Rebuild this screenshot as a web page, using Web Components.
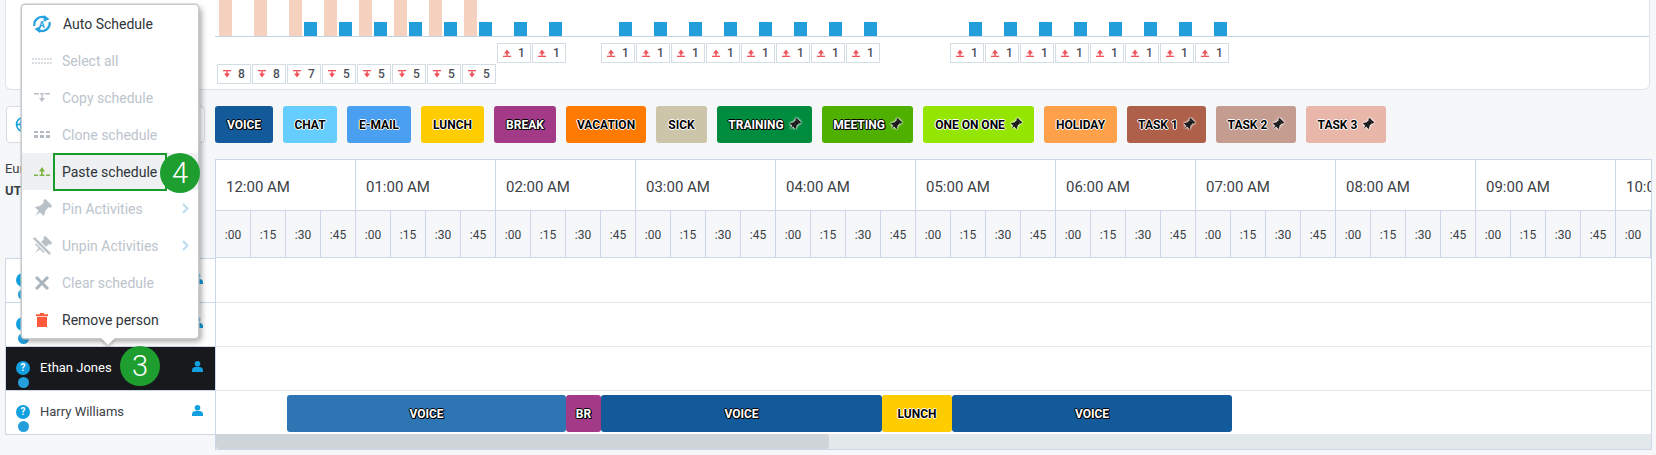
<!DOCTYPE html>
<html>
<head>
<meta charset="utf-8">
<title>Schedule</title>
<style>
    html, body
    {
        margin: 0;
        height: 455px;
        overflow: hidden;
        background: #f5f7f9;
        font-family: Roboto, "Liberation Sans", sans-serif;
    }
</style>
</head>
<body>
<sched-page></sched-page>

<script>
/**
 * small inline icons, shared by the components
 */
const objIcons =
{
    arrowDown: `<svg width="8" height="8" viewBox="0 0 8 8"><rect width="8" height="1.3" fill="#f0525c"/><path d="M3.2 1.3h1.6v2.2H7L4 7.6 1 3.5h2.2z" fill="#f0525c"/></svg>`,
    arrowUp: `<svg width="8" height="8" viewBox="0 0 8 8"><rect y="6.7" width="8" height="1.3" fill="#f0525c"/><path d="M3.2 6.7h1.6V4.5H7L4 .4 1 4.5h2.2z" fill="#f0525c"/></svg>`,
    pinShape: `<rect x="4" y="0.4" width="8" height="2.4" rx=".6"/><rect x="5.2" y="2.4" width="5.6" height="5"/><path d="M5.2 7 2.8 11h10.400L10.800 7z"/><path d="M7.200 10.800h1.600L8 16z"/>`,
    pin: (sColor, iSize) => `<svg width="${iSize}" height="${iSize}" viewBox="0 0 16 16"><g transform="rotate(45 8 8)" fill="${sColor}">${objIcons.pinShape}</g></svg>`,
    person: `<svg width="11" height="11" viewBox="0 0 11 11"><circle cx="5.5" cy="2.8" r="2.8" fill="#12a0e0"/><path d="M0 11V9.2C0 7.2 1.8 6 3.4 6h4.2C9.2 6 11 7.2 11 9.2V11z" fill="#12a0e0"/></svg>`
};

/**
 * chart on top: the bars and the under/over staffing badges
 */
class SchedChart extends HTMLElement
{
    static sTemplate = `
        <style>
            :host
            {
                display: block;
                box-sizing: border-box;
                width: 1645px;
                height: 90px;
                margin-left: 1px;
                padding-left: 209px;
                background: #fff;
                border: 1px solid #dde3e7;
                border-top: none;
                border-radius: 0 0 6px 6px;
            }
            .bars
            {
                display: flex;
                height: 36px;
                border-bottom: 1px solid #c6d5e6;
            }
            .col
            {
                flex: 0 0 35px;
                box-sizing: border-box;
                display: flex;
                align-items: flex-end;
                gap: 2px;
                padding-left: 4px;
            }
            .col i { display: block; width: 13px; }
            .peach { height: 36px; background: #f5d1c0; }
            .blue { height: 14px; background: #229fdb; }
            .row
            {
                display: flex;
                height: 21px;
            }
            .up { margin-top: 6px; padding-left: 282px; }
            .down { padding-left: 2px; }
            .badge
            {
                flex: 0 0 34px;
                box-sizing: border-box;
                height: 20px;
                margin-right: 1px;
                display: flex;
                align-items: center;
                justify-content: center;
                gap: 7px;
                border: 1px solid #d3dee4;
                font-size: 12px;
                font-weight: 500;
                color: #4a4f57;
            }
            .up .badge:nth-child(3) { margin-left: 34px; }
            .up .badge:nth-child(11) { margin-left: 69px; }
        </style>
        <div class="bars"></div>
        <div class="row up"></div>
        <div class="row down"></div>
    `;

    constructor()
    {
        super();
        this.attachShadow({mode: "open"});

        const objTemplate = document.createElement("template");
        objTemplate.innerHTML = SchedChart.sTemplate;
        this.shadowRoot.appendChild(objTemplate.content.cloneNode(true));
    }

    connectedCallback()
    {
        const arrBlue = [2, 3, 4, 5, 6, 7, 8, 9, 11, 12, 13, 14, 15, 16, 17, 18, 21, 22, 23, 24, 25, 26, 27, 28];
        let sBars = "";

        for (let iCol = 0; iCol < 41; iCol++)
        {
            const sPeach = iCol < 8 ? `<i class="peach"></i>` : `<i></i>`;
            const sBlue = arrBlue.includes(iCol) ? `<i class="blue"></i>` : "";
            sBars += `<div class="col">${sPeach}${sBlue}</div>`;
        }
        this.shadowRoot.querySelector(".bars").innerHTML = sBars;

        let sUp = "";
        for (let iBadge = 0; iBadge < 18; iBadge++)
            sUp += `<div class="badge">${objIcons.arrowUp}<span>1</span></div>`;
        this.shadowRoot.querySelector(".up").innerHTML = sUp;

        this.shadowRoot.querySelector(".down").innerHTML = [8, 8, 7, 5, 5, 5, 5, 5]
            .map(iVal => `<div class="badge">${objIcons.arrowDown}<span>${iVal}</span></div>`).join("");
    }
}

/**
 * coloured activity block, used in the legend and on the timeline
 * attribute light: black letters with a white edge instead of white with a black edge
 */
class SchedChip extends HTMLElement
{
    static sTemplate = `
        <style>
            :host
            {
                display: flex;
                box-sizing: border-box;
                align-items: center;
                justify-content: center;
                height: 37px;
                border-radius: 3px;
                font-size: 12px;
                font-weight: 700;
                color: #fff;
                text-shadow: 1px 0 0 #000, -1px 0 0 #000, 0 1px 0 #000, 0 -1px 0 #000, 1px 1px 0 #000;
            }
            :host([light])
            {
                color: #000;
                text-shadow: 1px 0 0 #fff, -1px 0 0 #fff, 0 1px 0 #fff, 0 -1px 0 #fff;
            }
            .pin:not(:empty) { margin-left: 4px; }
            svg { display: block; filter: drop-shadow(0 0 1px #fff) drop-shadow(0 0 .5px #fff); }
        </style>
        <slot></slot><span class="pin"></span>
    `;

    constructor()
    {
        super();
        this.attachShadow({mode: "open"});

        const objTemplate = document.createElement("template");
        objTemplate.innerHTML = SchedChip.sTemplate;
        this.shadowRoot.appendChild(objTemplate.content.cloneNode(true));
    }

    connectedCallback()
    {
        this.style.background = this.getAttribute("color");
        this.style.width = this.getAttribute("w") + "px";

        if (this.hasAttribute("pinned"))
            this.shadowRoot.querySelector(".pin").innerHTML = objIcons.pin("#1b1b1b", 13);
    }
}

/**
 * row of chips above the timeline
 */
class SchedLegend extends HTMLElement
{
    static sTemplate = `
        <style>
            :host
            {
                display: flex;
                gap: 10px;
                height: 37px;
            }
        </style>
        <slot></slot>
    `;

    constructor()
    {
        super();
        this.attachShadow({mode: "open"}).innerHTML = SchedLegend.sTemplate;
    }
}

/**
 * hours, quarters, the person rows and the scrollbar
 */
class SchedTimeline extends HTMLElement
{
    static sTemplate = `
        <style>
            :host
            {
                display: block;
                box-sizing: border-box;
                width: 1437px;
                margin-top: 16px;
                background: #fff;
                border: 1px solid #cdd7ea;
                overflow: hidden;
            }
            .hours, .quarters { display: flex; width: 1540px; }
            .hour
            {
                flex: 0 0 140px;
                box-sizing: border-box;
                height: 51px;
                padding-left: 10px;
                line-height: 55px;
                font-size: 15px;
                color: #3b4046;
                border-right: 1px solid #cdd7ea;
                border-bottom: 1px solid #cdd7ea;
            }
            .quarter
            {
                flex: 0 0 35px;
                box-sizing: border-box;
                height: 47px;
                line-height: 49px;
                text-align: center;
                font-size: 12px;
                color: #3b4046;
                background: #f5f7f9;
                border-right: 1px solid #cdd7ea;
                border-bottom: 1px solid #cdd7ea;
            }
            .line
            {
                box-sizing: border-box;
                height: 44px;
                border-bottom: 1px solid #e4e6ea;
            }
            .line.first { height: 45px; }
            .line.last
            {
                height: 43px;
                border-bottom: none;
                display: flex;
                padding: 4px 0 2px 71px;
            }
            .track
            {
                height: 15px;
                background: #e3e8ea;
            }
            .thumb
            {
                width: 613px;
                height: 100%;
                background: #cfd4d8;
                border-radius: 0 4px 4px 4px;
            }
        </style>
        <div class="hours"></div>
        <div class="quarters"></div>
        <div class="line first"></div>
        <div class="line"></div>
        <div class="line"></div>
        <div class="line last"><slot></slot></div>
        <div class="track"><div class="thumb"></div></div>
    `;

    constructor()
    {
        super();
        this.attachShadow({mode: "open"}).innerHTML = SchedTimeline.sTemplate;
    }

    connectedCallback()
    {
        const arrHours = ["12:00 AM", "01:00 AM", "02:00 AM", "03:00 AM", "04:00 AM", "05:00 AM", "06:00 AM", "07:00 AM", "08:00 AM", "09:00 AM", "10:00 AM"];
        const arrQuarters = [":00", ":15", ":30", ":45"];

        this.shadowRoot.querySelector(".hours").innerHTML =
            arrHours.map(sHour => `<div class="hour">${sHour}</div>`).join("");

        //only the quarters that fit in the visible part
        let sQuarters = "";
        for (let iQuarter = 0; iQuarter < 41; iQuarter++)
            sQuarters += `<div class="quarter">${arrQuarters[iQuarter % 4]}</div>`;
        this.shadowRoot.querySelector(".quarters").innerHTML = sQuarters;
    }
}

/**
 * one person in the list on the left
 */
class SchedPerson extends HTMLElement
{
    static sTemplate = `
        <style>
            :host
            {
                display: flex;
                box-sizing: border-box;
                height: 44px;
                padding: 14px 12px 0 10px;
                font-size: 13px;
                color: #3b4046;
                background: #fff;
                border-bottom: 1px solid #cdd7ea;
            }
            :host([active])
            {
                background: #17191c;
                color: #fff;
            }
            :host([last]) { border-bottom: none; height: 43px; }
            .status
            {
                flex: 0 0 14px;
                display: flex;
                flex-direction: column;
                align-items: center;
                gap: 2px;
            }
            .question
            {
                width: 14px;
                height: 14px;
                border-radius: 50%;
                background: #12a0e0;
                color: #fff;
                font-size: 10px;
                font-weight: 700;
                line-height: 14px;
                text-align: center;
            }
            .dot
            {
                width: 11px;
                height: 11px;
                border-radius: 50%;
                background: #259fdb;
            }
            .name
            {
                flex: 1;
                margin-left: 10px;
                line-height: 14px;
            }
            svg { display: block; }
        </style>
        <div class="status"><div class="question">?</div><div class="dot"></div></div>
        <div class="name"><slot></slot></div>
        <span class="icon"></span>
    `;

    constructor()
    {
        super();
        this.attachShadow({mode: "open"}).innerHTML = SchedPerson.sTemplate;
        this.shadowRoot.querySelector(".icon").innerHTML = objIcons.person;
    }
}

/**
 * left column: timezone select, timezone text and the people
 */
class SchedSide extends HTMLElement
{
    static sTemplate = `
        <style>
            :host
            {
                display: block;
                width: 210px;
            }
            .zone
            {
                box-sizing: border-box;
                width: 199px;
                height: 37px;
                margin-left: 1px;
                padding: 9px 0 0 8px;
                background: #fff;
                border: 1px solid #d7dde2;
                border-radius: 4px;
            }
            .text
            {
                box-sizing: border-box;
                height: 115px;
                padding-top: 15px;
                font-size: 13px;
                line-height: 22px;
                color: #3b4046;
            }
            .text b { display: block; font-weight: 700; }
            .people
            {
                border: 1px solid #cdd7ea;
                border-right: none;
            }
            svg { display: block; }
        </style>
        <div class="zone">
            <svg width="17" height="17" viewBox="0 0 17 17" fill="none" stroke="#12a0e0" stroke-width="1.6"><circle cx="8.5" cy="8.5" r="7"/><ellipse cx="8.5" cy="8.5" rx="3" ry="7"/><path d="M1.5 8.5h14"/></svg>
        </div>
        <div class="text">Europe<b>UTC</b></div>
        <div class="people"><slot></slot></div>
    `;

    constructor()
    {
        super();
        this.attachShadow({mode: "open"}).innerHTML = SchedSide.sTemplate;
    }
}

/**
 * context menu with the tip pointing at the selected person
 */
class SchedMenu extends HTMLElement
{
    static sTemplate = `
        <style>
            :host
            {
                position: absolute;
                left: 22px;
                top: 5px;
                width: 176px;
                height: 333px;
                background: #fff;
                border-radius: 3px;
                box-shadow: 0 0 0 1.5px #c6cacd, 3px 3px 6px rgba(0, 0, 0, .4);
            }
            .tip
            {
                position: absolute;
                left: 81px;
                top: 328px;
                width: 10px;
                height: 10px;
                background: #fff;
                transform: rotate(45deg);
                box-shadow: 2px 2px 3px rgba(0, 0, 0, .2);
            }
        </style>
        <slot></slot>
        <div class="tip"></div>
    `;

    constructor()
    {
        super();
        this.attachShadow({mode: "open"}).innerHTML = SchedMenu.sTemplate;
    }
}

/**
 * menu line: icon from the light DOM, text, optional chevron
 */
class SchedMenuItem extends HTMLElement
{
    static sTemplate = `
        <style>
            :host
            {
                display: flex;
                position: relative;
                align-items: center;
                box-sizing: border-box;
                height: 37px;
                padding-left: 9px;
                font-size: 14px;
                color: #2f343a;
            }
            :host([disabled]) { color: #bcc4cc; }
            :host([hover]) { background: #eef0f2; }
            .icon
            {
                flex: 0 0 22px;
                display: flex;
                justify-content: center;
                margin-right: 9px;
            }
            :host([first]) .icon { margin-right: 10px; }
            .chevron
            {
                position: absolute;
                right: 9px;
                top: 13px;
                display: none;
            }
            :host([submenu]) .chevron { display: block; }
        </style>
        <div class="icon"><slot name="icon"></slot></div>
        <slot></slot>
        <svg class="chevron" width="7" height="11" viewBox="0 0 7 11" fill="none" stroke="#bcdcf0" stroke-width="2"><path d="M1 1l4.5 4.5L1 10"/></svg>
    `;

    constructor()
    {
        super();
        this.attachShadow({mode: "open"}).innerHTML = SchedMenuItem.sTemplate;
    }
}

/**
 * green numbered circle of the walkthrough
 */
class SchedStep extends HTMLElement
{
    static sTemplate = `
        <style>
            :host
            {
                position: absolute;
                width: 40px;
                height: 40px;
                border-radius: 50%;
                background: #1f9e30;
                color: #fff;
                font-size: 29px;
                font-weight: 300;
                line-height: 40px;
                text-align: center;
            }
        </style>
        <slot></slot>
    `;

    constructor()
    {
        super();
        this.attachShadow({mode: "open"}).innerHTML = SchedStep.sTemplate;
    }
}

/**
 * whole page
 */
class SchedPage extends HTMLElement
{
    static sTemplate = `
        <style>
            :host
            {
                display: block;
                position: relative;
                width: 1656px;
                height: 455px;
                padding-left: 4px;
                box-sizing: border-box;
                overflow: hidden;
            }
            .main
            {
                display: flex;
                margin: 16px 0 0 1px;
            }
            .outline
            {
                position: absolute;
                left: 53px;
                top: 153px;
                width: 110px;
                height: 34px;
                border: 2px solid #1a9a2c;
            }
            .pointText { font: 700 9px Roboto, sans-serif; fill: #29a3e0; }
        </style>

        <sched-chart></sched-chart>

        <div class="main">
            <sched-side>
                <sched-person><span></span></sched-person>
                <sched-person><span></span></sched-person>
                <sched-person active>Ethan Jones</sched-person>
                <sched-person last>Harry Williams</sched-person>
            </sched-side>
            <div>
                <sched-legend>
                    <sched-chip color="#135a9a" w="58">VOICE</sched-chip>
                    <sched-chip color="#66ceff" w="54" light>CHAT</sched-chip>
                    <sched-chip color="#4a9ff0" w="64" light>E-MAIL</sched-chip>
                    <sched-chip color="#ffcc00" w="63" light>LUNCH</sched-chip>
                    <sched-chip color="#a33a88" w="62">BREAK</sched-chip>
                    <sched-chip color="#ff7a00" w="80" light>VACATION</sched-chip>
                    <sched-chip color="#cdc5a9" w="51" light>SICK</sched-chip>
                    <sched-chip color="#008c3e" w="95" pinned>TRAINING</sched-chip>
                    <sched-chip color="#4fb000" w="91" pinned>MEETING</sched-chip>
                    <sched-chip color="#94e600" w="111" pinned light>ONE ON ONE</sched-chip>
                    <sched-chip color="#ffa04a" w="73" light>HOLIDAY</sched-chip>
                    <sched-chip color="#ae604a" w="79" pinned light>TASK 1</sched-chip>
                    <sched-chip color="#c49c90" w="80" pinned light>TASK 2</sched-chip>
                    <sched-chip color="#e8b7aa" w="80" pinned light>TASK 3</sched-chip>
                </sched-legend>
                <sched-timeline>
                    <sched-chip color="#2e75b4" w="279">VOICE</sched-chip>
                    <sched-chip color="#a33a88" w="35">BR</sched-chip>
                    <sched-chip color="#135a9a" w="281">VOICE</sched-chip>
                    <sched-chip color="#ffcc00" w="70" light>LUNCH</sched-chip>
                    <sched-chip color="#135a9a" w="280">VOICE</sched-chip>
                </sched-timeline>
            </div>
        </div>

        <sched-menu>
            <sched-menu-item first>
                <svg slot="icon" width="20" height="18" viewBox="0 0 20 18" fill="none" stroke="#29a3e0" stroke-width="2.2"><path d="M2.5 11A7.500 7.500 0 0 1 13.500 3"/><path d="M17.500 7A7.500 7.500 0 0 1 6.500 15"/><path d="M12 0l5.500 4-6 3z" fill="#29a3e0" stroke="none"/><path d="M8 18l-5.500-4 6-3z" fill="#29a3e0" stroke="none"/><text class="pointText" x="6.800" y="12.500" stroke="none">A</text></svg>
                Auto Schedule
            </sched-menu-item>
            <sched-menu-item disabled>
                <svg slot="icon" width="20" height="6" viewBox="0 0 20 6" fill="none" stroke="#cfd3d8" stroke-width="1.5" stroke-dasharray="2 1"><path d="M0 1h20M0 5h20"/></svg>
                Select all
            </sched-menu-item>
            <sched-menu-item disabled>
                <svg slot="icon" width="16" height="10" viewBox="0 0 16 10" fill="#b9bfc5"><path d="M0 0h5v1.500H0zM6 0h4v1.500H6zM11 0h5v1.500h-5z"/><path d="M7.300 2h1.400v3H11L8 9 5 5h2.300z"/></svg>
                Copy schedule
            </sched-menu-item>
            <sched-menu-item disabled>
                <svg slot="icon" width="16" height="7" viewBox="0 0 16 7" fill="#b4bbc2"><path d="M0 0h4v2H0zM6 0h4v2H6zM12 0h4v2h-4zM0 4h4v3H0zM6 4h4v3H6zM12 4h4v3h-4z"/></svg>
                Clone schedule
            </sched-menu-item>
            <sched-menu-item hover>
                <svg slot="icon" width="16" height="9" viewBox="0 0 16 9" fill="#7cb342"><path d="M7.200 8V4.500H5L8 0l3 4.500H8.800V8z"/><path d="M0 7.500h4V9H0zM5.500 7.500h5V9h-5zM12 7.500h4V9h-4z"/></svg>
                Paste schedule
            </sched-menu-item>
            <sched-menu-item disabled submenu>
                <svg slot="icon" width="20" height="20" viewBox="0 0 16 16"><g transform="rotate(45 8 8)" fill="#b9c0c7"><rect x="4" y=".4" width="8" height="2.400" rx=".6"/><rect x="5.200" y="2.400" width="5.600" height="5"/><path d="M5.200 7 2.800 11h10.400L10.800 7z"/><path d="M7.200 10.800h1.600L8 16z"/></g></svg>
                Pin Activities
            </sched-menu-item>
            <sched-menu-item disabled submenu>
                <svg slot="icon" width="20" height="20" viewBox="0 0 16 16"><g transform="rotate(45 8 8)" fill="#b9c0c7"><rect x="4" y=".4" width="8" height="2.400" rx=".6"/><rect x="5.200" y="2.400" width="5.600" height="5"/><path d="M5.200 7 2.800 11h10.400L10.800 7z"/><path d="M7.200 10.800h1.600L8 16z"/></g><path d="M1.500 1.500l13 13" stroke="#fff" stroke-width="3.500"/><path d="M1.500 1.500l13 13" stroke="#b9c0c7" stroke-width="1.800"/></svg>
                Unpin Activities
            </sched-menu-item>
            <sched-menu-item disabled>
                <svg slot="icon" width="14" height="14" viewBox="0 0 14 14" stroke="#a9b4bc" stroke-width="3"><path d="M1 1l12 12M13 1L1 13"/></svg>
                Clear schedule
            </sched-menu-item>
            <sched-menu-item>
                <svg slot="icon" width="12" height="14" viewBox="0 0 12 14" fill="#ff5a3c"><path d="M4 0h4v1.200h4v2H0v-2h4z"/><path d="M1 4h10v10H1z"/></svg>
                Remove person
            </sched-menu-item>
        </sched-menu>

        <div class="outline"></div>
        <sched-step style="left: 160px; top: 153px;">4</sched-step>
        <sched-step style="left: 120px; top: 346px;">3</sched-step>
    `;

    constructor()
    {
        super();
        this.attachShadow({mode: "open"}).innerHTML = SchedPage.sTemplate;
    }
}

/**
 * make components available in HTML
 */
customElements.define("sched-chart", SchedChart);
customElements.define("sched-chip", SchedChip);
customElements.define("sched-legend", SchedLegend);
customElements.define("sched-timeline", SchedTimeline);
customElements.define("sched-person", SchedPerson);
customElements.define("sched-side", SchedSide);
customElements.define("sched-menu", SchedMenu);
customElements.define("sched-menu-item", SchedMenuItem);
customElements.define("sched-step", SchedStep);
customElements.define("sched-page", SchedPage);
</script>
</body>
</html>
